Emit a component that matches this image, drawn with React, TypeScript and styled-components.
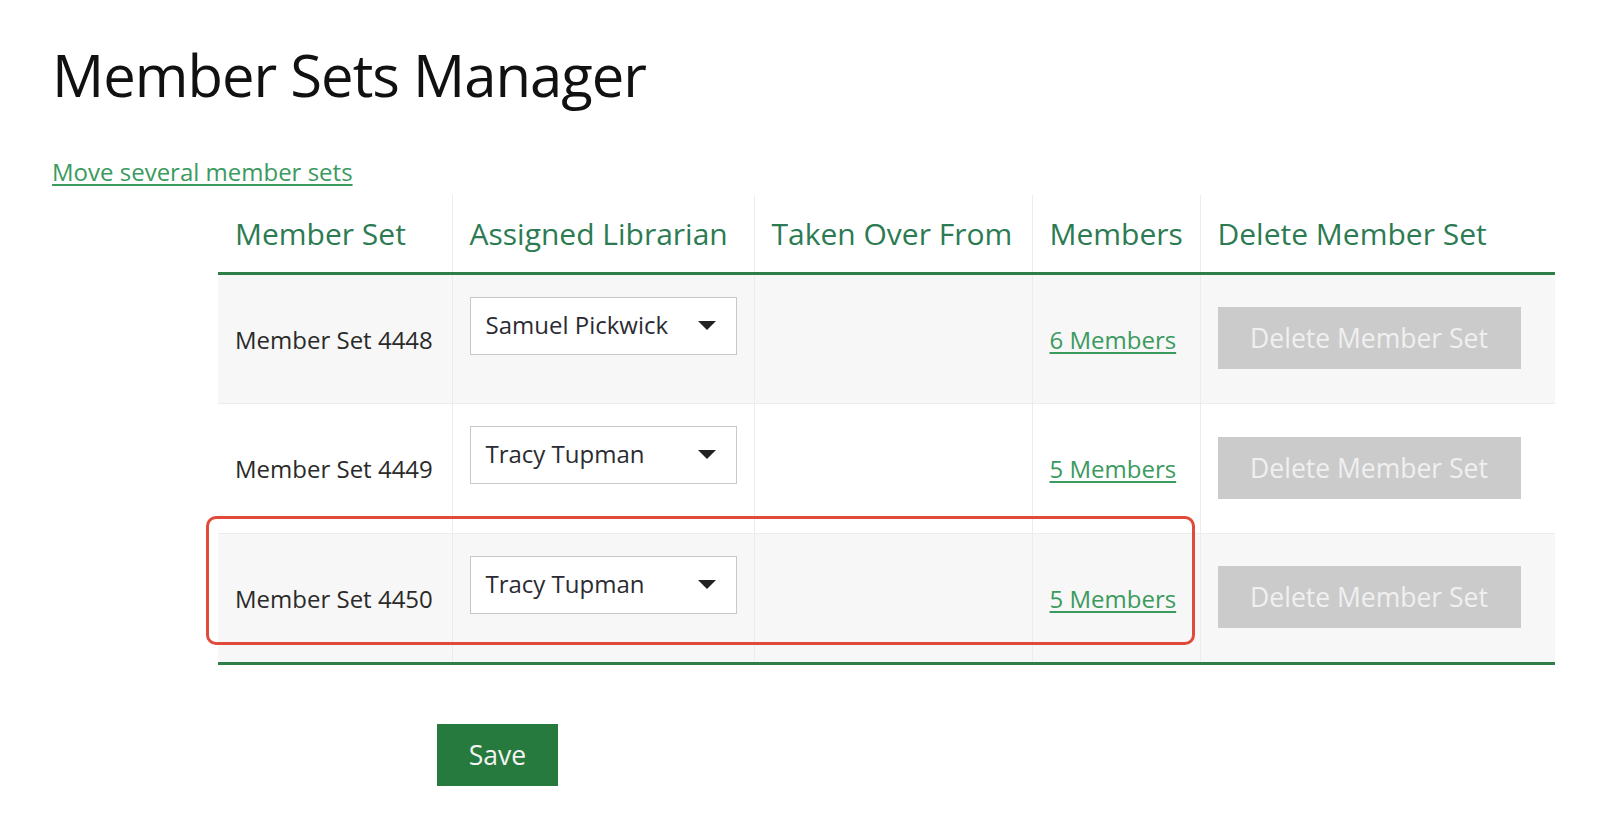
import React from "react";
import styled, { createGlobalStyle } from "styled-components";

const GlobalStyle = createGlobalStyle`
  html, body { margin: 0; padding: 0; background: #ffffff; }
  body { font-family: "Open Sans", "Liberation Sans", sans-serif; color: #222; }
`;

const Page = styled.div`
  padding: 35px 0 30px 52px;
`;

const Title = styled.h1`
  margin: 0;
  font-size: 58px;
  font-weight: 400;
  line-height: 80px;
  letter-spacing: -1px;
  color: #111;
`;

const MoveLink = styled.a`
  display: block;
  width: fit-content;
  margin-top: 41px;
  font-size: 24px;
  line-height: 32px;
  color: #3b9a5e;
  text-decoration: underline;
  text-underline-offset: 3px;
  cursor: pointer;
`;

const TableWrap = styled.div`
  position: relative;
  margin: 7px 0 0 166px;
  width: 1337px;
`;

const Table = styled.table`
  width: 100%;
  border-collapse: collapse;
  table-layout: fixed;
  border-bottom: 3px solid #2f7d48;
`;

const HeadCell = styled.th`
  height: 77px;
  padding: 0 17px;
  text-align: left;
  font-size: 30px;
  font-weight: 400;
  color: #2c7b52;
  white-space: nowrap;
  border-bottom: 3px solid #2f7d48;
  & + & { border-left: 1px solid #ececec; }
`;

const Row = styled.tr<{ $shaded: boolean }>`
  height: 130px;
  background: ${(p) => (p.$shaded ? "#f7f7f7" : "#ffffff")};
  & + & { border-top: 1px solid #ececec; }
`;

const Cell = styled.td<{ $top?: boolean }>`
  padding: ${(p) => (p.$top ? "22px 17px 0" : "0 17px")};
  vertical-align: ${(p) => (p.$top ? "top" : "middle")};
  font-size: 24px;
  color: #2a2a2a;
  white-space: nowrap;
  & + & { border-left: 1px solid #ececec; }
`;

const SelectBox = styled.div`
  box-sizing: border-box;
  width: 267px;
  height: 58px;
  display: flex;
  align-items: center;
  justify-content: space-between;
  padding: 0 20px 3px 15px;
  background: #fff;
  border: 1px solid #c8c8c8;
  font-size: 24px;
  color: #2b2b33;
`;

const Caret = styled.span`
  width: 0;
  height: 0;
  border-left: 9.5px solid transparent;
  border-right: 9.5px solid transparent;
  border-top: 9.5px solid #222;
  margin-top: 1px;
`;

const MembersLink = styled.a`
  font-size: 24px;
  color: #3b9a5e;
  text-decoration: underline;
  text-underline-offset: 3px;
  cursor: pointer;
`;

const DeleteButton = styled.button`
  box-sizing: border-box;
  width: 303px;
  height: 62px;
  margin-top: -2px;
  border: none;
  background: #cbcbcb;
  color: #f0f0f0;
  font-family: "Open Sans", "Liberation Sans", sans-serif;
  font-size: 26.5px;
  cursor: default;
`;

const Highlight = styled.div`
  position: absolute;
  left: -12px;
  top: 321px;
  width: 989px;
  height: 129px;
  box-sizing: border-box;
  border: 3px solid #e04a3a;
  border-radius: 10px;
  pointer-events: none;
`;

const SaveButton = styled.button`
  display: block;
  margin: 59px 0 0 385px;
  width: 121px;
  height: 62px;
  border: none;
  background: #267a3e;
  color: #f4f4f4;
  font-family: "Open Sans", "Liberation Sans", sans-serif;
  font-size: 26.5px;
  cursor: pointer;
`;

const rows = [
  { name: "Member Set 4448", librarian: "Samuel Pickwick", members: "6 Members" },
  { name: "Member Set 4449", librarian: "Tracy Tupman", members: "5 Members" },
  { name: "Member Set 4450", librarian: "Tracy Tupman", members: "5 Members" },
];

export default function App() {
  return (
    <>
      <GlobalStyle />
      <Page>
        <Title>Member Sets Manager</Title>
        <MoveLink>Move several member sets</MoveLink>
        <TableWrap>
          <Table>
            <colgroup>
              <col style={{ width: 234 }} />
              <col style={{ width: 302 }} />
              <col style={{ width: 278 }} />
              <col style={{ width: 168 }} />
              <col style={{ width: 355 }} />
            </colgroup>
            <thead>
              <tr>
                <HeadCell>Member Set</HeadCell>
                <HeadCell>Assigned Librarian</HeadCell>
                <HeadCell>Taken Over From</HeadCell>
                <HeadCell>Members</HeadCell>
                <HeadCell>Delete Member Set</HeadCell>
              </tr>
            </thead>
            <tbody>
              {rows.map((r, i) => (
                <Row key={r.name} $shaded={i % 2 === 0}>
                  <Cell>{r.name}</Cell>
                  <Cell $top>
                    <SelectBox>
                      <span>{r.librarian}</span>
                      <Caret />
                    </SelectBox>
                  </Cell>
                  <Cell />
                  <Cell>
                    <MembersLink>{r.members}</MembersLink>
                  </Cell>
                  <Cell>
                    <DeleteButton disabled>Delete Member Set</DeleteButton>
                  </Cell>
                </Row>
              ))}
            </tbody>
          </Table>
          <Highlight />
        </TableWrap>
        <SaveButton>Save</SaveButton>
      </Page>
    </>
  );
}
